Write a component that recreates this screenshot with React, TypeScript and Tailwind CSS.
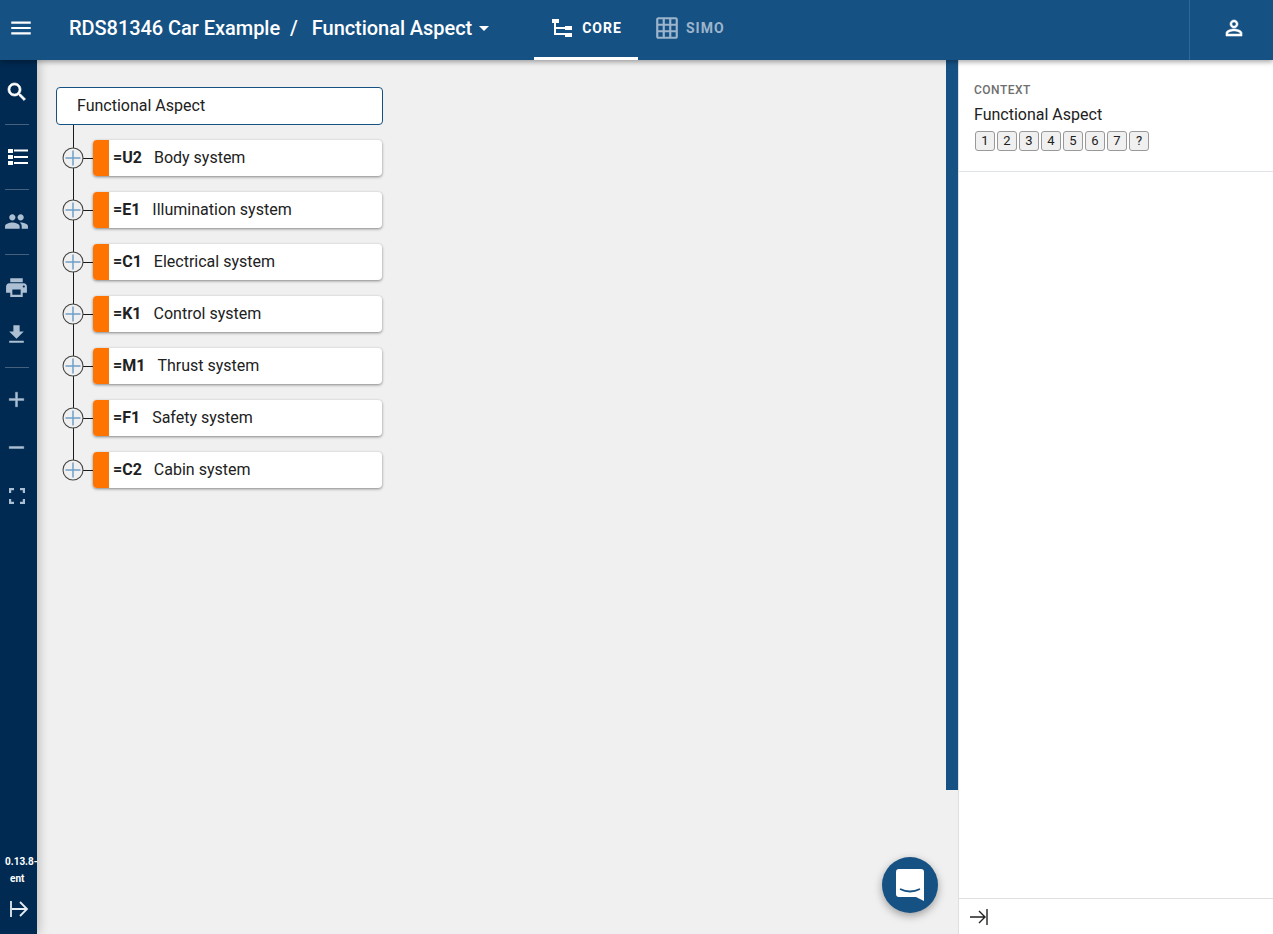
import React from "react";
import { MdMenu, MdPeople, MdPrint, MdGetApp, MdArrowDropDown, MdGridOn } from "react-icons/md";

const rows = [
  ["=U2", "Body system"],
  ["=E1", "Illumination system"],
  ["=C1", "Electrical system"],
  ["=K1", "Control system"],
  ["=M1", "Thrust system"],
  ["=F1", "Safety system"],
  ["=C2", "Cabin system"],
];

function Glyph({ d, size, weight }: { d: string; size: number; weight: number }) {
  return (
    <svg width={size} height={size} viewBox="0 0 24 24">
      <path d={d} fill="currentColor" stroke="currentColor" strokeWidth={weight} />
    </svg>
  );
}

const SEARCH = "M15.5 14h-.79l-.28-.27C15.41 12.59 16 11.11 16 9.5 16 5.91 13.09 3 9.5 3S3 5.91 3 9.5 5.91 16 9.5 16c1.61 0 3.09-.59 4.23-1.57l.27.28v.79l5 4.99L20.49 19l-4.99-5zm-6 0C7.01 14 5 11.99 5 9.5S7.01 5 9.5 5 14 7.01 14 9.5 11.99 14 9.5 14z";
const PERSON = "M12 5.9c1.16 0 2.1.94 2.1 2.1s-.94 2.1-2.1 2.1S9.9 9.16 9.9 8s.94-2.1 2.1-2.1m0 9c2.97 0 6.1 1.46 6.1 2.1v1.1H5.9V17c0-.64 3.13-2.1 6.1-2.1M12 4C9.79 4 8 5.79 8 8s1.79 4 4 4 4-1.79 4-4-1.79-4-4-4zm0 9c-2.67 0-8 1.34-8 4v3h16v-3c0-2.66-5.33-4-8-4z";
const ADD = "M19 13h-6v6h-2v-6H5v-2h6V5h2v6h6v2z";
const REMOVE = "M19 13H5v-2h14v2z";

function Connector({ last }: { last: boolean }) {
  return (
    <svg width="37" height="52" viewBox="0 0 37 52" className="shrink-0">
      <path d={last ? "M17.5 0V26" : "M17.5 0V52"} stroke="#1a1a1a" strokeWidth="1" fill="none" />
      <path d="M27 26.5H37" stroke="#1a1a1a" strokeWidth="1" />
      <circle cx="17" cy="26" r="10" fill="#f0f0f0" stroke="#444" strokeWidth="1.1" />
      <path d="M17 18.5V33.5M9.5 26H24.5" stroke="#6f9fc8" strokeWidth="1.5" />
    </svg>
  );
}

function Rule() {
  return <div className="ml-[5px] h-px w-[24px] bg-[#46617d]" />;
}

function RailBtn({ children, className }: { children: React.ReactNode; className: string }) {
  return <div className={"flex items-center justify-center pr-[4px] " + className}>{children}</div>;
}

export default function App() {
  return (
    <div className="flex h-[934px] w-[1273px] flex-col overflow-hidden bg-[#f0f0f0] font-['Roboto',sans-serif] text-[#212121]">
      <header className="relative z-20 flex h-[60px] shrink-0 items-center bg-[#165183] text-white shadow-[0_2px_5px_rgba(0,0,0,0.35)]">
        <div className="flex w-[42px] justify-center pb-[4px]"><MdMenu size={26} /></div>
        <div className="ml-[27px] flex w-[465px] items-center pb-[4px] text-[20px] font-medium tracking-[-0.05px]">
          <span>RDS81346 Car Example</span>
          <span className="ml-[10px] mr-[14px]">/</span>
          <span>Functional Aspect</span>
          <MdArrowDropDown size={24} />
        </div>
        <div className="flex h-full w-[104px] items-center justify-center gap-[10px] border-b-[3px] border-white pb-[1px] pl-[2px]">
          <svg width="20" height="19" viewBox="0 0 20 19" fill="white">
            <rect x="0" y="0" width="7" height="4" />
            <rect x="2" y="4" width="2" height="12" />
            <rect x="2" y="8" width="11" height="2" />
            <rect x="2" y="14" width="11" height="2" />
            <rect x="13" y="7" width="7" height="4" />
            <rect x="13" y="14" width="7" height="4" />
          </svg>
          <span className="text-[14px] font-bold tracking-[0.07em]">CORE</span>
        </div>
        <div className="ml-[16px] flex items-center gap-[6px] pb-[4px] text-[#9db5cc]">
          <MdGridOn size={26} />
          <span className="text-[14px] font-bold tracking-[0.07em]">SIMO</span>
        </div>
        <div className="ml-auto flex h-full w-[84px] items-center justify-center border-l border-[#33679a] pb-[4px] pl-[5px]">
          <Glyph d={PERSON} size={24} weight={0.6} />
        </div>
      </header>

      <div className="flex min-h-0 flex-1">
        <aside className="relative z-10 flex w-[37px] shrink-0 flex-col bg-[#012a52] text-[#adbfd2] shadow-[2px_0_10px_rgba(0,0,0,0.22)]">
          <RailBtn className="h-[64px] text-white"><Glyph d={SEARCH} size={24} weight={0.7} /></RailBtn>
          <Rule />
          <RailBtn className="h-[64px] pl-[2px] text-white">
            <svg width="20" height="16" viewBox="0 0 20 16" fill="white">
              <rect x="0" y="0" width="5" height="4" /><rect x="6" y="0.5" width="14" height="2" />
              <rect x="0" y="6" width="5" height="4" /><rect x="6" y="7" width="14" height="2" />
              <rect x="0" y="12" width="5" height="4" /><rect x="6" y="13" width="14" height="2" />
            </svg>
          </RailBtn>
          <Rule />
          <RailBtn className="h-[64px] pb-[2px]"><MdPeople size={25} /></RailBtn>
          <Rule />
          <RailBtn className="h-[64px]"><MdPrint size={25} /></RailBtn>
          <RailBtn className="mt-[-9px] h-[48px]"><MdGetApp size={25} /></RailBtn>
          <div className="mt-[9px]"><Rule /></div>
          <RailBtn className="mt-[7px] h-[48px]"><Glyph d={ADD} size={25} weight={0.4} /></RailBtn>
          <RailBtn className="h-[48px]"><Glyph d={REMOVE} size={25} weight={0.4} /></RailBtn>
          <RailBtn className="h-[48px] pt-[2px]">
            <svg width="16" height="16" viewBox="0 0 16 16" fill="none" stroke="#adbfd2" strokeWidth="2.4">
              <path d="M1 5V1H5M11 1H15V5M15 11V15H11M5 15H1V11" />
            </svg>
          </RailBtn>
          <div className="mt-auto whitespace-nowrap pl-[5px] text-[10px] leading-[17px] font-bold text-white">
            <div>0.13.8-</div>
            <div className="pl-[5px]">ent</div>
          </div>
          <RailBtn className="h-[47px] pb-[4px] pl-[4px] pr-0 text-white">
            <svg width="20" height="20" viewBox="0 0 20 20" fill="none" stroke="#e6ecf2" strokeWidth="1.8">
              <path d="M2 2V18M3 10H18M11 3L18 10L11 17" />
            </svg>
          </RailBtn>
        </aside>

        <main className="relative flex min-w-0 flex-1">
          <div className="flex-1 pl-[19px] pt-[27px]">
            <div className="w-[327px]">
              <div className="flex h-[38px] items-center rounded-[4px] border border-[#165183] bg-white pl-[20px] text-[16px]">Functional Aspect</div>
              <div className="ml-[17px] h-[7px] w-px bg-[#1a1a1a]" />
              {rows.map(([code, name], i) => (
                <div key={code} className="flex h-[52px] items-center">
                  <Connector last={i === rows.length - 1} />
                  <div className="flex h-[36px] w-[289px] items-stretch overflow-hidden rounded-[4px] bg-white shadow-[0_1px_3px_rgba(0,0,0,0.45)]">
                    <div className="w-[16px] bg-[#ff7300]" />
                    <div className="flex items-center gap-[12px] pl-[4px] text-[16px]">
                      <span className="font-bold">{code}</span>
                      <span>{name}</span>
                    </div>
                  </div>
                </div>
              ))}
            </div>
          </div>
          <div className="h-[730px] w-[12px] shrink-0 bg-[#165183]" />
          <div className="absolute bottom-[21px] right-[20px] flex h-[56px] w-[56px] items-center justify-center rounded-full bg-[#165183] shadow-[0_3px_8px_rgba(0,0,0,0.35)]">
            <svg width="28" height="32" viewBox="0 0 28 32">
              <path d="M3 0H25A3 3 0 0 1 28 3V32L20 28H3A3 3 0 0 1 0 25V3A3 3 0 0 1 3 0Z" fill="white" />
              <path d="M4 20Q14 25 24 20" stroke="#165183" strokeWidth="1.8" fill="none" />
            </svg>
          </div>
        </main>

        <aside className="flex w-[315px] shrink-0 flex-col border-l border-[#dfdfdf] bg-white">
          <div className="h-[112px] border-b border-[#e0e3e8] pl-[15px] pt-[23px]">
            <div className="text-[12px] leading-[14px] font-medium tracking-[0.04em] text-[#6e6e6e]">CONTEXT</div>
            <div className="mt-[8px] text-[16px] leading-[20px]">Functional Aspect</div>
            <div className="ml-[1px] mt-[6px] flex gap-[2px]">
              {["1", "2", "3", "4", "5", "6", "7", "?"].map((k) => (
                <span key={k} className="flex h-[20px] w-[20px] items-center justify-center rounded-[3px] border border-[#999] bg-[#f0f0f0] text-[13px]">{k}</span>
              ))}
            </div>
          </div>
          <div className="flex-1" />
          <div className="flex h-[36px] items-center border-t border-[#e0e0e0] pl-[11px]">
            <svg width="18" height="18" viewBox="0 0 18 18" fill="none" stroke="#222" strokeWidth="1.4">
              <path d="M0 9H15M9 3L15 9L9 15M17 1V17" />
            </svg>
          </div>
        </aside>
      </div>
    </div>
  );
}
